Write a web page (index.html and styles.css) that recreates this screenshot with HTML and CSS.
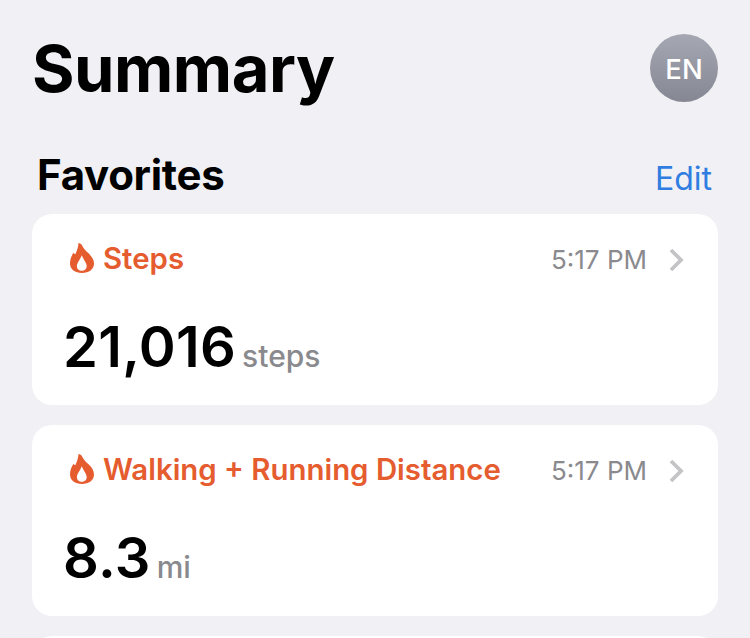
FILE: index.html
```html
<!DOCTYPE html>
<html lang="en">
<head>
    <meta charset="UTF-8">
    <meta name="viewport" content="width=device-width, initial-scale=1.0">
    <title>Summary</title>
    <link rel="stylesheet" href="styles.css">
</head>
<body>
    <div class="page">
        <header class="top-bar">
            <h1>Summary</h1>
            <div class="avatar">EN</div>
        </header>

        <div class="section-head">
            <h2>Favorites</h2>
            <span class="edit">Edit</span>
        </div>

        <!-- Steps -->
        <div class="card">
            <div class="card-head">
                <svg class="flame" viewBox="0 0 24 30"><path fill-rule="evenodd" d="M8.500 0c2.500.4 3.500 1.900 4.300 3.700 1 2.200 3 3.900 5.500 6.400 3.200 3.100 5.700 6.200 5.700 10.400C24 26.200 18.900 30 12 30S0 26.200 0 20.500c0-3.900 1.400-7.700 3.500-10.700.5.700 1 1.200 1.800 1.400C7.100 7.600 8.300 3.700 8.500 0zM11.800 27.800c2.800 0 4.900-1.900 4.900-4.600 0-3.400-3-6.100-4.900-10.900-1.900 4.800-4.900 7.500-4.900 10.900 0 2.700 2.100 4.600 4.900 4.600z"/></svg>
                <span class="card-title">Steps</span>
                <span class="time">5:17 PM</span>
                <svg class="chevron" viewBox="0 0 16 24"><path d="M3 2 13 12 3 22"/></svg>
            </div>
            <div class="card-value"><span class="number">21,016</span><span class="unit">steps</span></div>
        </div>

        <!-- Distance -->
        <div class="card">
            <div class="card-head">
                <svg class="flame" viewBox="0 0 24 30"><path fill-rule="evenodd" d="M8.500 0c2.500.4 3.500 1.900 4.300 3.700 1 2.200 3 3.900 5.500 6.400 3.200 3.100 5.700 6.200 5.700 10.400C24 26.200 18.900 30 12 30S0 26.200 0 20.500c0-3.900 1.400-7.700 3.500-10.700.5.700 1 1.200 1.800 1.400C7.100 7.600 8.300 3.700 8.500 0zM11.800 27.800c2.800 0 4.900-1.900 4.900-4.600 0-3.400-3-6.100-4.900-10.900-1.900 4.800-4.900 7.500-4.900 10.900 0 2.700 2.100 4.600 4.900 4.600z"/></svg>
                <span class="card-title">Walking + Running Distance</span>
                <span class="time">5:17 PM</span>
                <svg class="chevron" viewBox="0 0 16 24"><path d="M3 2 13 12 3 22"/></svg>
            </div>
            <div class="card-value"><span class="number">8.3</span><span class="unit">mi</span></div>
        </div>

        <div class="card"></div>
    </div>
</body>
</html>
```

FILE: styles.css
```css
body {
    font-family: Inter, "Liberation Sans", sans-serif;
    background-color: #f0f0f5;
    color: #000;
    margin: 0;
}

.page {
    height: 638px;
    padding: 0 32px;
    box-sizing: border-box;
    overflow: hidden;
}

.top-bar {
    display: flex;
    justify-content: space-between;
    align-items: center;
    height: 138px;
    padding-bottom: 2px;
    box-sizing: border-box;
}

h1 {
    font-size: 65px;
    font-weight: 700;
    letter-spacing: -0.5px;
    margin: 0;
}

.avatar {
    width: 68px;
    height: 68px;
    border-radius: 50%;
    background: linear-gradient(#a5a8b2, #858893);
    color: #fff;
    font-size: 27.5px;
    font-weight: 500;
    padding-top: 1px;
    box-sizing: border-box;
    display: flex;
    justify-content: center;
    align-items: center;
}

.section-head {
    display: flex;
    justify-content: space-between;
    align-items: center;
    height: 76px;
    padding: 0 6px 0 5px;
    box-sizing: border-box;
}

h2 {
    font-size: 42px;
    font-weight: 700;
    letter-spacing: -0.3px;
    margin: 0 0 4px;
}

.edit {
    color: #2f7de1;
    font-size: 32px;
    margin-top: 4px;
}

.card {
    background-color: #fff;
    border-radius: 20px;
    height: 191px;
    margin-bottom: 20px;
    padding: 0 34px 0 38px;
    box-sizing: border-box;
}

.card-head {
    display: flex;
    align-items: center;
    height: 91px;
    margin-bottom: 8px;
}

.flame {
    width: 24px;
    height: 30px;
    fill: #e55c2f;
    margin: 0 9px 4px 0;
}

.card-title {
    color: #e55c2f;
    font-size: 29.4px;
    font-weight: 600;
    flex: 1;
    margin-bottom: 2px;
}

.time {
    color: #8a8a8e;
    font-size: 26px;
    margin-right: 21px;
}

.chevron {
    width: 16px;
    height: 24px;
    fill: none;
    stroke: #c4c4c7;
    stroke-width: 3.8;
}

.card-value {
    display: flex;
    align-items: baseline;
    margin-left: -7px;
}

.number {
    font-size: 56px;
    font-weight: 600;
    letter-spacing: 0.3px;
    margin-right: 6px;
}

.unit {
    color: #8a8a8e;
    font-size: 30px;
    font-weight: 500;
}
```
